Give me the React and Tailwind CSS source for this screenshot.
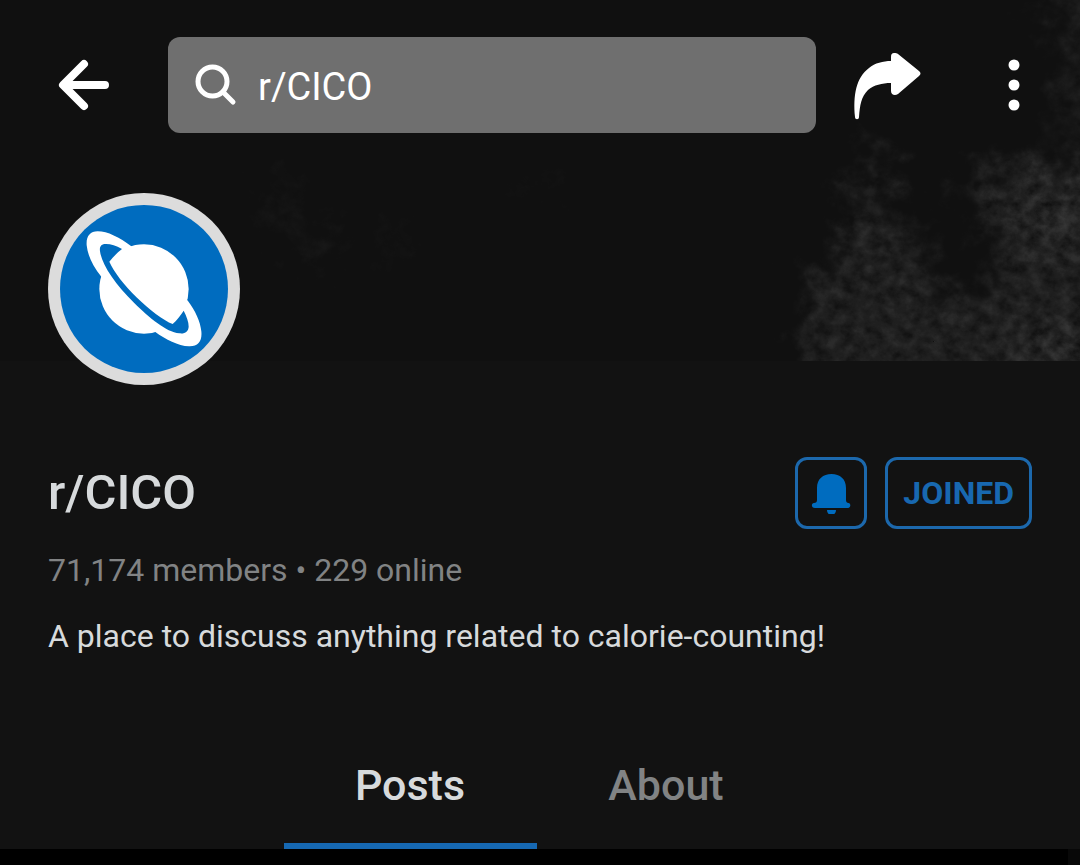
import React, { useState } from 'react';

function BannerArt() {
  return (
    <svg
      aria-hidden="true"
      className="absolute inset-0 h-full w-full"
      viewBox="0 0 1080 361"
      preserveAspectRatio="xMaxYMax slice"
    >
      <defs>
        <filter id="dust" filterUnits="userSpaceOnUse" x="0" y="-60" width="1180" height="500" colorInterpolationFilters="sRGB">
          <feGaussianBlur in="SourceGraphic" stdDeviation="14" result="soft" />
          <feTurbulence type="fractalNoise" baseFrequency="0.04" numOctaves="6" seed="8" result="warp" />
          <feDisplacementMap in="soft" in2="warp" scale="70" xChannelSelector="R" yChannelSelector="G" result="cloud" />
          <feTurbulence type="fractalNoise" baseFrequency="0.07 0.08" numOctaves="7" seed="21" />
          <feColorMatrix values="0 0 0 0 1  0 0 0 0 1  0 0 0 0 1  1.5 0 0 0 -0.2" result="grain" />
          <feComposite in="cloud" in2="grain" operator="in" />
        </filter>
      </defs>
      <g filter="url(#dust)" fill="#ffffff">
        <path d="M872 145L892 147L884 215L920 235L932 290L985 295L998 262L985 205L952 200L990 165L1045 158L1150 165V430H800L812 300L795 290L844 255L852 190Z" fillOpacity="0.115" />
        <path d="M1010 180L1150 180V250L1010 250ZM1010 335L1150 300V430H990Z" fillOpacity="0.05" />
        <path d="M1066 -40H1150V150L1045 135L1068 60L1046 20Z" fillOpacity="0.07" />
        <path d="M275 175L295 180L290 240L330 225L335 265L310 262L270 225ZM375 240L410 220L390 265ZM525 180L550 175L545 205Z" fillOpacity="0.06" />
      </g>
    </svg>
  );
}

function CommunityAvatar() {
  return (
    <svg viewBox="24 24 576 576" className="h-48 w-48" role="img" aria-label="r/CICO community icon">
      <circle cx="312" cy="312" r="288" fill="#dcdcdc" />
      <circle cx="312" cy="312" r="252" fill="#006cbf" />
      <circle cx="312" cy="312" r="134" fill="#fff" />
      <path
        fill="#fff"
        d="M274 184C238 157 203 139 173 139C150 139 138 154 140 181C143 211 158 243 184 275L250 360L345 440C378 464 414 482 447 484C475 485 487 468 484 439C481 410 466 377 444 348L360 250Z"
      />
      <path
        fill="#006cbf"
        d="M246 192C228 182 213 177 198 177C184 177 178 184 180 199C185 237 224 297 282 353C330 400 378 440 418 445C435 447 445 440 446 425C446 411 440 394 431 377C423 390 411 405 398 417C370 406 327 373 291 338C252 300 222 261 208 230C219 216 232 203 246 192Z"
      />
    </svg>
  );
}

const tabs = ['Posts', 'About'];

export default function App() {
  const [tab, setTab] = useState('Posts');
  const [query, setQuery] = useState('r/CICO');

  return (
    <div className="min-h-screen bg-black font-['Roboto',sans-serif]">
      <div className="bg-[#121212]">
        <header className="relative h-[361px] bg-[#101010] pt-[37px]">
          <BannerArt />
          <div className="relative flex h-24 items-center pl-12 pr-[42px]">
            <button type="button" aria-label="Back" className="flex h-18 w-18 shrink-0 items-center justify-center text-white">
              <svg viewBox="0 0 72 72" className="h-18 w-18" fill="none" stroke="currentColor" strokeWidth="8" strokeLinecap="round" strokeLinejoin="round">
                <path d="M36 15L15 36L36 57M16 36H57" />
              </svg>
            </button>
            <label className="ml-12 flex h-24 min-w-0 flex-1 items-center rounded-xl bg-white/40 pl-6 pr-6">
              <svg viewBox="0 0 48 48" className="h-12 w-12 shrink-0 text-white" fill="none" stroke="currentColor" strokeWidth="5" strokeLinecap="round" aria-hidden="true">
                <circle cx="20.5" cy="20.5" r="14.5" />
                <path d="M31 31L41 41" />
              </svg>
              <input
                type="text"
                aria-label="Search"
                value={query}
                onChange={(e) => setQuery(e.target.value)}
                className="ml-[18px] h-14 min-w-0 flex-1 bg-transparent pt-1 text-[38px] text-white outline-none"
              />
            </label>
            <button type="button" aria-label="Share" className="ml-9 h-18 w-18 shrink-0 text-white">
              <svg viewBox="0 0 72 72" className="h-18 w-18" fill="currentColor">
                <path d="M3 68C1 46 4 29 17 19C23 14 31 12 39 12V8C39 5 40 4 42 4C44 4 45 4 46 5L67 22C69 24 69 25 67 27L46 45C43 47 39 46 39 42V34C30 34 22 36 16 41C9 48 8 56 7 68C7 71 3 71 3 68Z" />
              </svg>
            </button>
            <button type="button" aria-label="More options" className="ml-[66px] h-18 w-12 shrink-0 text-white">
              <svg viewBox="0 0 48 72" className="h-18 w-12" fill="currentColor">
                <circle cx="24" cy="16" r="5.5" />
                <circle cx="24" cy="36" r="5.5" />
                <circle cx="24" cy="56" r="5.5" />
              </svg>
            </button>
          </div>
        </header>

        <main>
          <div className="relative -mt-[168px] px-12">
            <CommunityAvatar />
          </div>
          <section className="px-12 pt-18">
            <div className="flex items-center gap-[18px]">
              <h1 className="min-w-0 flex-1 text-[49px] leading-[72px] font-medium text-[#d7dadc]">r/CICO</h1>
              <button type="button" aria-label="Notifications" className="flex h-18 w-18 items-center justify-center rounded-xl border-3 border-[#1c68ac]">
                <svg viewBox="0 0 40 42" className="h-[42px] w-10" fill="#006cbf">
                  <path d="M6 28V16C6 7 12 2 20.500 2S35 7 35 16V28C35 30 36 31 37.500 31C40 31 40 36 37 36H4C0 36 0 31 3 31C5 31 6 30 6 28ZM16 38H25C25 41 23 43 20.500 43S16 41 16 38Z" />
                </svg>
              </button>
              <button type="button" className="h-18 rounded-xl border-3 border-[#1c68ac] px-[15px] text-[32px] leading-10 font-bold text-[#1868b0]">JOINED</button>
            </div>
            <p className="mt-5 text-[32px] leading-[42px] text-[#818384]">71,174 members • 229 online</p>
            <p className="mt-6 text-[32px] leading-[42px] text-[#d7dadc]">A place to discuss anything related to calorie-counting!</p>
          </section>
          <nav className="mt-[66px] flex justify-center gap-[3px] pr-1" role="tablist">
            {tabs.map((name) => (
              <button
                key={name}
                type="button"
                role="tab"
                aria-selected={tab === name}
                onClick={() => setTab(name)}
                className={`h-[126px] w-[253px] border-b-6 pt-1 text-[43px] leading-[48px] font-medium ${tab === name ? 'border-[#1668b2] text-[#d7dadc]' : 'border-transparent text-[#818384]'}`}
              >
                {name}
              </button>
            ))}
          </nav>
        </main>
      </div>
      <div className="ml-auto h-4 w-3 bg-[#080808]" />
    </div>
  );
}
